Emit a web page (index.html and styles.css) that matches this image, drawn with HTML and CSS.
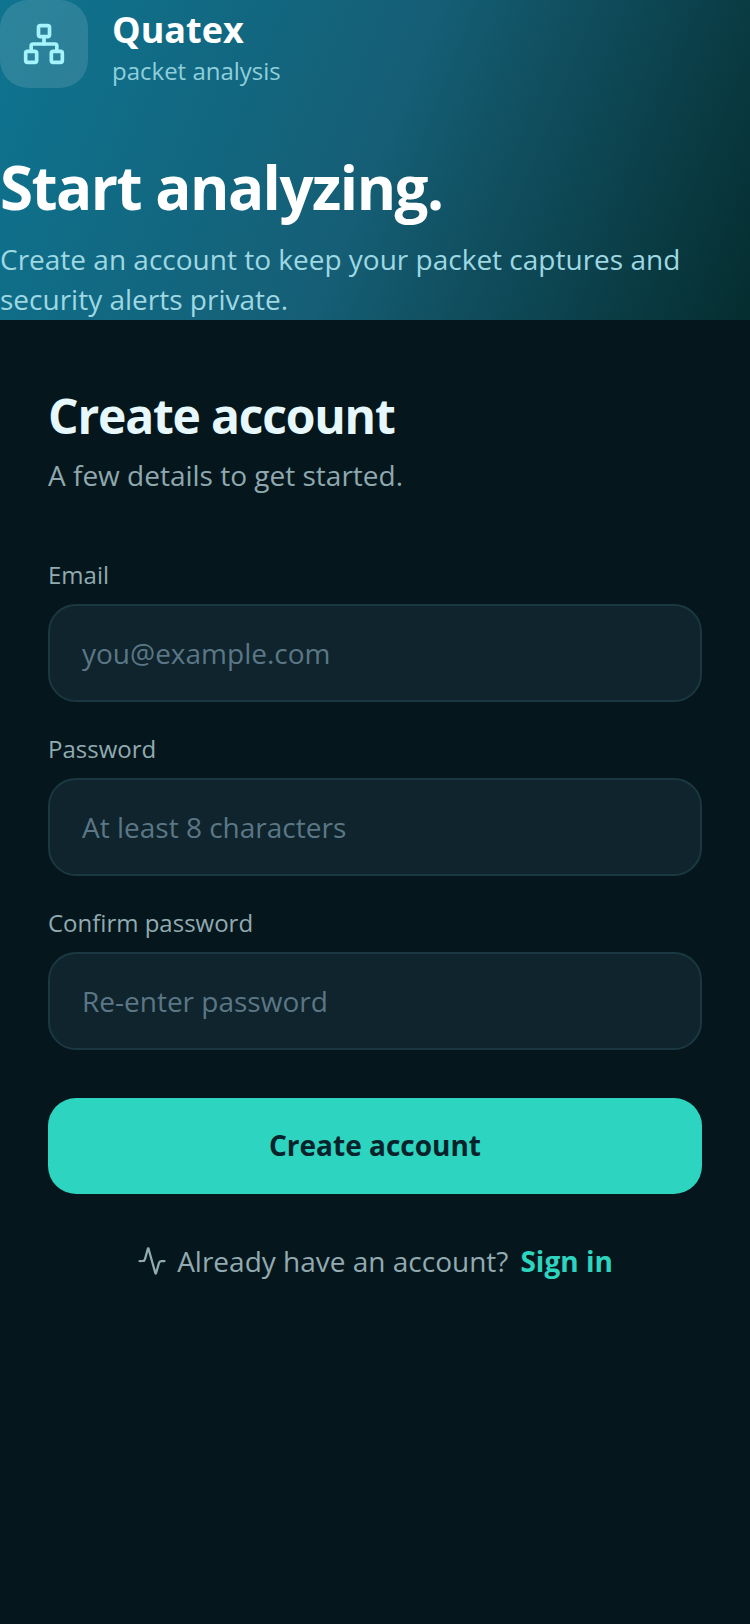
FILE: index.html
```html
<!DOCTYPE html>
<html lang="en">
<head>
  <meta charset="UTF-8">
  <title>Quatex - Create account</title>
  <link rel="stylesheet" href="styles.css">
</head>
<body>
<div id="app">
  <header class="hero">
    <div class="brand">
      <div class="brand-icon">
        <svg width="44" height="44" viewBox="0 0 24 24" fill="none" stroke="currentColor" stroke-width="2" stroke-linecap="round" stroke-linejoin="round">
          <rect x="9" y="2" width="6" height="6" rx="1"></rect>
          <rect x="2" y="16" width="6" height="6" rx="1"></rect>
          <rect x="16" y="16" width="6" height="6" rx="1"></rect>
          <path d="M5 16v-3a1 1 0 0 1 1-1h12a1 1 0 0 1 1 1v3"></path>
          <path d="M12 12V8"></path>
        </svg>
      </div>
      <div class="brand-text">
        <div class="brand-name">Quatex</div>
        <div class="brand-sub">packet analysis</div>
      </div>
    </div>
    <h1>Start analyzing.</h1>
    <p class="hero-text">Create an account to keep your packet captures and security alerts private.</p>
  </header>

  <form class="form">
    <h2>Create account</h2>
    <p class="form-sub">A few details to get started.</p>

    <label class="field">
      <span>Email</span>
      <input type="email" placeholder="you@example.com">
    </label>
    <label class="field">
      <span>Password</span>
      <input type="password" placeholder="At least 8 characters">
    </label>
    <label class="field">
      <span>Confirm password</span>
      <input type="password" placeholder="Re-enter password">
    </label>

    <button type="button" class="submit">Create account</button>

    <div class="signin">
      <svg width="30" height="30" viewBox="0 0 24 24" fill="none" stroke="currentColor" stroke-width="1.8" stroke-linecap="round" stroke-linejoin="round">
        <path d="M22 12h-2.5a2 2 0 0 0-1.9 1.5l-2.4 8.3a.25.25 0 0 1-.5 0L9.2 2.2a.25.25 0 0 0-.5 0l-2.3 8.3A2 2 0 0 1 4.5 12H2"></path>
      </svg>
      <span>Already have an account?</span>
      <a href="javascript:">Sign in</a>
    </div>
  </form>
</div>
</body>
</html>
```

FILE: styles.css
```css
* {
  margin: 0;
  padding: 0;
  box-sizing: border-box;
}

body {
  background-color: #05171c;
  font-family: "Open Sans", "Noto Sans", sans-serif;
}

#app {
  width: 750px;
  height: 1624px;
  overflow: hidden;
}

.hero {
  height: 320px;
  background: linear-gradient(112deg, #0e7490 0%, #155e75 50%, #052d2f 100%);
}

.brand {
  display: flex;
  gap: 24px;
}

.brand-icon {
  width: 88px;
  height: 88px;
  border-radius: 28px;
  background-color: rgba(255, 255, 255, .12);
  color: #a5f3fc;
  display: flex;
  align-items: center;
  justify-content: center;
}

.brand-name {
  font-size: 36px;
  line-height: 46px;
  margin-top: 7px;
  font-weight: 700;
  color: #fff;
}

.brand-sub {
  font-size: 24px;
  line-height: 32px;
  margin-top: 2px;
  color: #8fcfdc;
}

h1 {
  margin-top: 63px;
  font-size: 60px;
  line-height: 72px;
  font-weight: 700;
  letter-spacing: -1.5px;
  color: #fff;
}

.hero-text {
  margin-top: 16px;
  font-size: 28px;
  line-height: 40px;
  color: #9ed8e3;
}

.form {
  padding: 64px 48px 0;
  display: flex;
  flex-direction: column;
}

h2 {
  font-size: 48px;
  line-height: 64px;
  font-weight: 700;
  letter-spacing: -1.2px;
  color: #e6f8fb;
}

.form-sub {
  margin-top: 7px;
  font-size: 28px;
  line-height: 40px;
  color: #8fa8af;
}

.field {
  display: block;
  margin-bottom: 29px;
}

.form-sub + .field {
  margin-top: 62px;
}

.field span {
  display: block;
  font-size: 24px;
  line-height: 36px;
  margin-bottom: 11px;
  color: #92aab1;
}

.field input {
  display: block;
  width: 100%;
  height: 98px;
  padding: 0 32px;
  border: 2px solid #1b3842;
  border-radius: 28px;
  background-color: #0f242c;
  font-family: inherit;
  font-size: 28px;
  color: #e6f8fb;
  outline: none;
}

.field input::placeholder {
  color: #5b7786;
  opacity: 1;
}

.submit {
  margin-top: 19px;
  height: 96px;
  padding-bottom: 2px;
  border: none;
  border-radius: 28px;
  background-color: #2dd4bf;
  font-family: inherit;
  font-size: 28px;
  font-weight: 700;
  color: #06222a;
}

.signin {
  margin-top: 47px;
  display: flex;
  align-items: center;
  justify-content: center;
  gap: 12px;
  font-size: 28px;
  line-height: 40px;
  color: #92aab1;
}

.signin svg {
  margin-right: -2px;
}

.signin a {
  font-weight: 700;
  color: #2dd4bf;
  text-decoration: none;
}
```
